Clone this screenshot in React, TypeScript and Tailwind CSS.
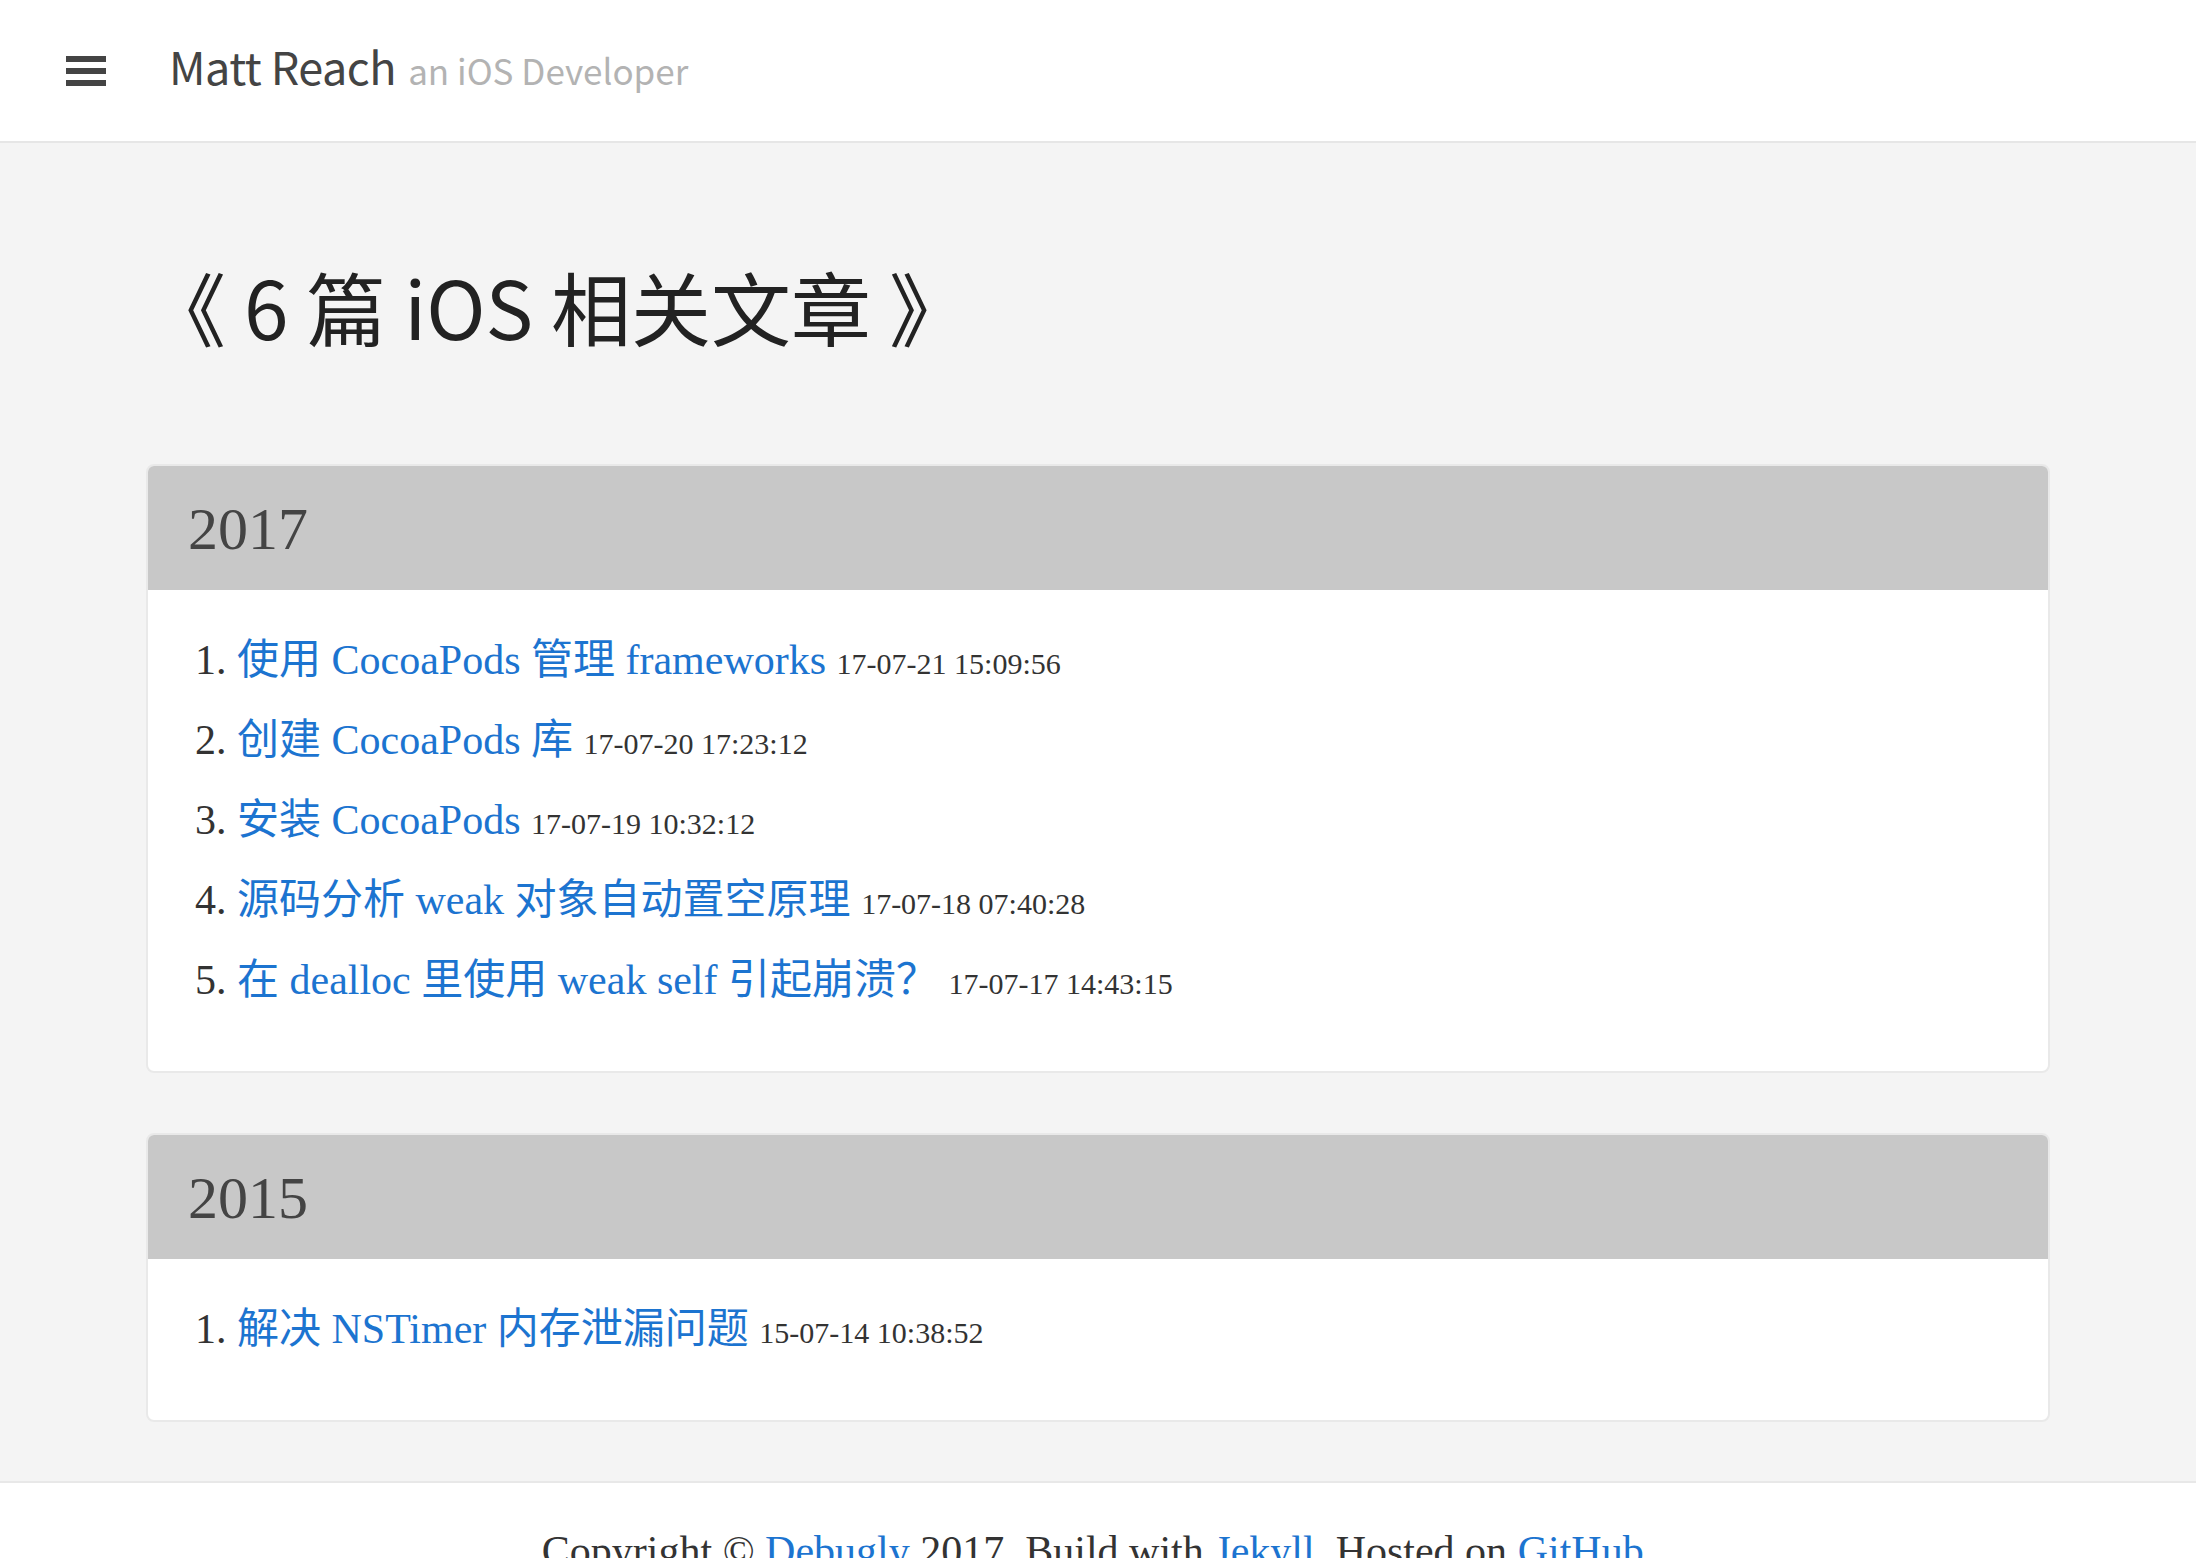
import React from "react";

type Post = { title: string; date: string };

const groups: { year: string; posts: Post[] }[] = [
  {
    year: "2017",
    posts: [
      { title: "使用 CocoaPods 管理 frameworks", date: "17-07-21 15:09:56" },
      { title: "创建 CocoaPods 库", date: "17-07-20 17:23:12" },
      { title: "安装 CocoaPods", date: "17-07-19 10:32:12" },
      { title: "源码分析 weak 对象自动置空原理", date: "17-07-18 07:40:28" },
      { title: "在 dealloc 里使用 weak self 引起崩溃？", date: "17-07-17 14:43:15" },
    ],
  },
  {
    year: "2015",
    posts: [{ title: "解决 NSTimer 内存泄漏问题", date: "15-07-14 10:38:52" }],
  },
];

function YearCard({ year, posts, className }: { year: string; posts: Post[]; className?: string }) {
  return (
    <section className={"bg-white border-2 border-[#e9e9e9] rounded-[8px] overflow-hidden " + (className ?? "")}>
      <div className="bg-[#c8c8c8] h-[124px] pl-[40px] pt-[33px] text-[60px] leading-none text-[#444]">{year}</div>
      <ol className="pt-[30px] pb-[51px] pl-[47px]">
        {posts.map((p, i) => (
          <li key={i} className="h-[80px] text-[42px] leading-[80px] whitespace-nowrap text-[#333]">
            <span>{i + 1}.</span>{" "}
            <a href="#" className="text-[#1c74d0]">
              {p.title}
            </a>{" "}
            <span className="text-[30px] leading-none">{p.date}</span>
          </li>
        ))}
      </ol>
    </section>
  );
}

export default function App() {
  return (
    <div className="min-h-screen bg-[#f4f4f4] font-['Liberation_Serif','Noto_Sans_CJK_SC',serif] text-[#333]">
      <header className="h-[143px] bg-white border-b-2 border-[#e6e6e6] flex items-center pl-[66px]">
        <div className="flex flex-col gap-[6px] w-[40px]">
          <span className="block h-[6px] bg-[#444]" />
          <span className="block h-[6px] bg-[#444]" />
          <span className="block h-[6px] bg-[#444]" />
        </div>
        <div className="ml-[63px] mb-[10px] flex items-baseline font-['Noto_Sans_CJK_SC',sans-serif]">
          <span className="text-[45px] leading-none text-[#444] tracking-[-0.5px]">Matt Reach</span>
          <span className="ml-[12px] text-[35px] leading-none text-[#b3b3b3]">an iOS Developer</span>
        </div>
      </header>

      <main className="w-[1904px] mx-auto pt-[122px] pb-[59px]">
        <h1 className="font-['Noto_Sans_CJK_SC',sans-serif] text-[80px] leading-none font-normal text-[#222] mb-[119px]">
          《 6 篇 iOS 相关文章 》
        </h1>
        {groups.map((g, i) => (
          <YearCard key={g.year} year={g.year} posts={g.posts} className={i > 0 ? "mt-[60px]" : ""} />
        ))}
      </main>

      <footer className="bg-white border-t-2 border-[#e8e8e8] pt-[37px] pb-[40px] text-center text-[42px] leading-[1.5] text-[#333]">
        Copyright © <a href="#" className="text-[#1c74d0]">Debugly</a> 2017. Build with{" "}
        <a href="#" className="text-[#1c74d0]">Jekyll</a>. Hosted on{" "}
        <a href="#" className="text-[#1c74d0]">GitHub</a>.
      </footer>
    </div>
  );
}
